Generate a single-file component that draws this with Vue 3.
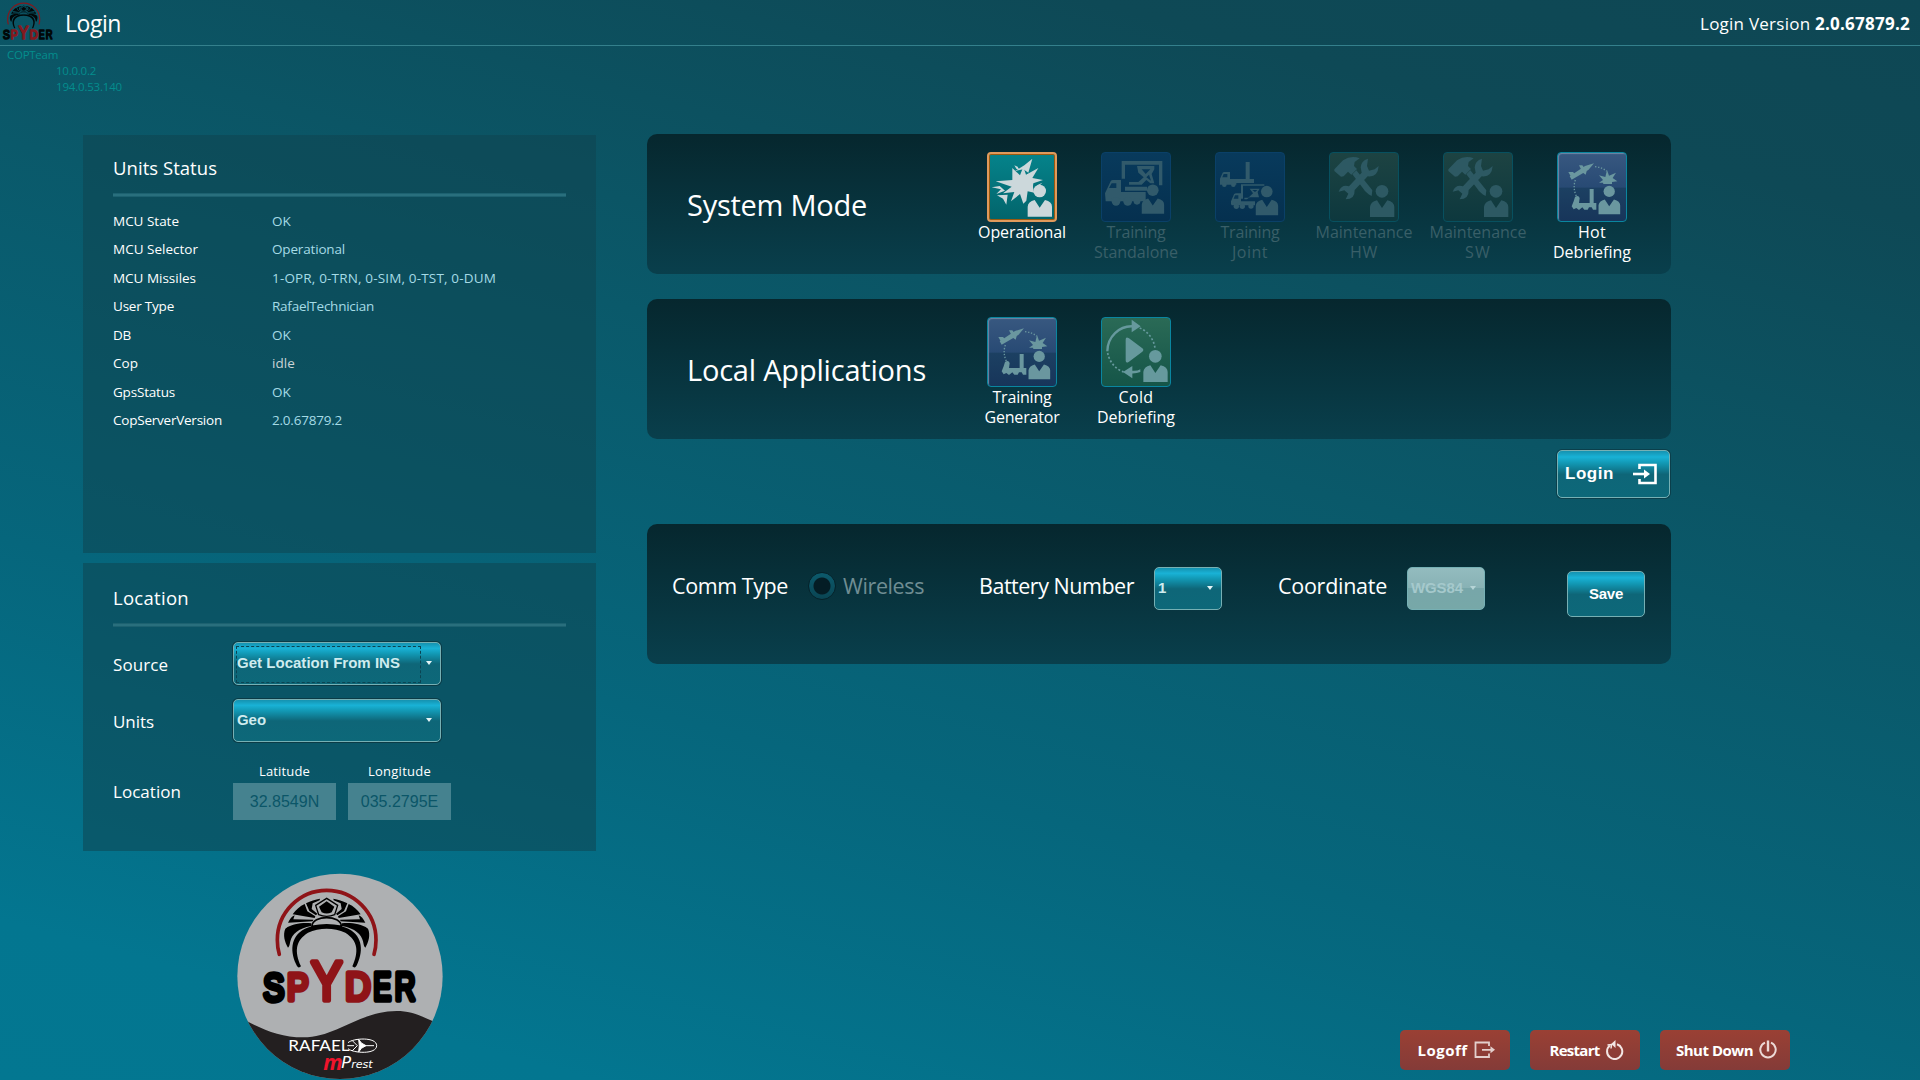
<script setup>
const status = [
  ['MCU State', 'OK', 66, 19],
  ['MCU Selector', 'Operational', 85, 73],
  ['MCU Missiles', '1-OPR, 0-TRN, 0-SIM, 0-TST, 0-DUM', 83, 224],
  ['User Type', 'RafaelTechnician', 61, 102],
  ['DB', 'OK', 18, 19],
  ['Cop', 'idle', 25, 23],
  ['GpsStatus', 'OK', 62, 19],
  ['CopServerVersion', '2.0.67879.2', 109, 70],
]

const modes = [
  { icon: 'blast', kind: 'active', lines: [['Operational', 88]] },
  { icon: 'truck', kind: 'navy', off: true, lines: [['Training', 59], ['Standalone', 84]] },
  { icon: 'joint', kind: 'navy', off: true, lines: [['Training', 59], ['Joint', 36]] },
  { icon: 'tools', kind: 'olive', off: true, lines: [['Maintenance', 97], ['HW', 28]] },
  { icon: 'tools', kind: 'olive', off: true, lines: [['Maintenance', 97], ['SW', 26]] },
  { icon: 'launch', kind: 'blue', lines: [['Hot', 28], ['Debriefing', 78]] },
]

const apps = [
  { icon: 'launch', kind: 'blue', lines: [['Training', 59], ['Generator', 75]] },
  { icon: 'replay', kind: 'green', lines: [['Cold', 35], ['Debriefing', 78]] },
]

// Tracks a label so that it fills the given width in pixels.
const vFit = {
  mounted(el, { value }) {
    const w = el.getBoundingClientRect().width
    el.style.letterSpacing = `${(value - w) / el.textContent.length}px`
  },
}
</script>

<template>
  <div class="screen">
    <svg class="defs" aria-hidden="true">
      <symbol id="brand" viewBox="120 80 480 360">
        <path d="M178 283C173 268 172 254 172 240A148 149 0 0 1 468 240C468 254 467 268 462 283" fill="none" stroke="#8f1418" stroke-width="11" stroke-linecap="round" />
        <g fill="#000">
          <path d="M243 319C236 326 232 321 228 312C208 268 214 222 262 203C298 190 342 190 378 203C426 222 432 268 412 312C408 321 404 326 397 319C417 274 414 242 376 218C342 202 298 202 264 218C226 242 223 274 243 319Z" />
          <path d="M274 190C248 188 218 190 196 206C188 224 194 246 204 263C209 260 209 252 211 244C216 222 234 206 274 198Z" />
          <path d="M366 190C392 188 422 190 444 206C452 224 446 246 436 263C431 260 431 252 429 244C424 222 406 206 366 198Z" />
          <path d="M278 184L204 188C210 176 216 169 224 166L220 178L280 179Z" />
          <path d="M362 184L436 188C430 176 424 169 416 166L420 178L360 179Z" />
          <path d="M284 174L218 163C228 149 240 138 254 132L262 154L286 169Z" />
          <path d="M356 174L422 163C412 149 400 138 386 132L378 154L354 169Z" />
          <path d="M288 166L268 153L258 130C272 123 286 118 300 116L299 121L278 130L275 147L292 161Z" />
          <path d="M352 166L372 153L382 130C368 123 354 118 340 116L341 121L362 130L365 147L348 161Z" />
          <path d="M320 124L343 140L335 157Q320 164 305 157L297 140Z" />
        </g>
        <path d="M320 115L287 136L296 164Q320 174 344 164L353 136Z" fill="none" stroke="#000" stroke-width="4" />
        <path d="M276 199C276 164 364 164 364 199Q320 190 276 199Z" fill="var(--hub)" stroke="#000" stroke-width="5" />
        <g class="word" stroke-width="16" stroke-linejoin="round">
          <text x="130" y="422" font-size="115" textLength="63" lengthAdjust="spacingAndGlyphs">S</text>
          <text class="red" x="201" y="420" font-size="113" textLength="65" lengthAdjust="spacingAndGlyphs">P</text>
          <text x="460" y="421" font-size="115" textLength="54" lengthAdjust="spacingAndGlyphs">E</text>
          <text x="524" y="421" font-size="115" textLength="62" lengthAdjust="spacingAndGlyphs">R</text>
          <text class="red" x="376" y="420" font-size="115" textLength="76" lengthAdjust="spacingAndGlyphs">D</text>
          <text class="red" x="273" y="420" font-size="166" textLength="94" lengthAdjust="spacingAndGlyphs">Y</text>
        </g>
      </symbol>
      <symbol id="person" viewBox="0 0 210 210">
        <circle cx="158" cy="117" r="19" />
        <path d="M122 194V164Q123 149 143 144L158 167L174 144Q195 149 195 164V194Z" />
      </symbol>
      <symbol id="blast" viewBox="0 0 210 210">
        <path d="M76 48L99 70L109 44L117 68L154 48L136 78L168 84L139 94Q136 110 142 122L122 118L118 146L109 155L99 126L72 148L82 120L48 124L74 104L26 88L76 84Z" />
        <path d="M136 20L124 62L109 52L84 57L112 40ZM14 106L38 102L54 116L28 126L42 112ZM30 130L62 128L58 158L48 140ZM82 40L92 44L97 54L88 50ZM150 100L166 92L154 104Z" />
        <use href="#person" />
      </symbol>
      <symbol id="truck" viewBox="0 0 210 210">
        <path d="M62 27H184V100H174V38H72V80H62ZM72 104H138V116H72ZM12 124L29 88Q31 84 36 84H60V120H134V148H14Z" />
        <path d="M108 42H160V52L152 66L160 94H148L136 84L122 98H84V90H112L128 76L112 62ZM122 52L134 66L148 52ZM144 68L136 76L150 86Z" fill-rule="evenodd" />
        <circle cx="45" cy="148" r="13" /><circle cx="80" cy="148" r="13" /><circle cx="108" cy="148" r="10" />
        <path d="M32 94H46V108H24Z" class="cut" />
        <use href="#person" transform="translate(10 7) scale(.92)" />
      </symbol>
      <symbol id="joint" viewBox="0 0 210 210">
        <path d="M15 92V80L23 62Q24 60 28 60H45V81H92V30H104V81H117V93H64V98H15ZM78 97H148V101H84V140H78ZM48 156V148L57 127Q59 124 64 124H78V148H120V160H50Z" />
        <path d="M104 110H134L128 120L132 136H104L96 142H88V137H100L114 124ZM112 114L120 120L127 114Z" fill-rule="evenodd" />
        <circle cx="28" cy="98" r="7" /><circle cx="55" cy="98" r="7" /><circle cx="64" cy="163" r="8" /><circle cx="82" cy="163" r="8" /><circle cx="108" cy="162" r="8" />
        <path d="M26 66H37V76H22ZM60 130H70V140H56Z" class="cut" />
        <use href="#person" transform="translate(10 11) scale(.92)" />
      </symbol>
      <symbol id="tools" viewBox="0 0 210 210">
        <path d="M16 52L42 25Q66 9 92 19L77 30L75 42L84 51L67 68L57 59L44 73L36 74L16 57Z" />
        <path d="M70 67L82 55L130 115L128 132Q110 122 103 110Z" />
        <path d="M117 20Q96 26 95 46L98 62L60 103Q38 96 29 119L46 115L58 125L50 142Q78 142 77 114L116 73Q146 77 149 42L137 52L120 56L114 42Z" />
        <use href="#person" transform="translate(1 1)" />
      </symbol>
      <symbol id="launch" viewBox="0 0 210 210">
        <path d="M38 73L84 42L111 34L94 54L44 83ZM34 60L48 60L56 68L42 74ZM66 40L76 40L82 48L72 52ZM78 62L90 54L86 68Z" />
        <path d="M114 44Q136 46 149 58M55 84Q46 110 60 136" fill="none" stroke="currentColor" stroke-width="4" stroke-dasharray="4 5" />
        <path d="M150 54L156 71L177 62L167 78L181 88L165 90V96H139L138 92L126 92L138 84L126 70L145 75Z" />
        <path d="M44 163L50 148L54 135Q64 128 68 138L66 153H98V111H110V153H118V173H108L104 166H96L92 173H82L76 166L66 174L58 168L50 172Z" />
        <use href="#person" transform="translate(16 14) scale(.89)" />
      </symbol>
      <symbol id="replay" viewBox="0 0 210 210">
        <path d="M19 103A73 76 0 0 1 96 28" fill="none" stroke="currentColor" stroke-width="7" />
        <path d="M116 33A73 76 0 0 1 162 94M20 108A73 76 0 0 0 68 165" fill="none" stroke="currentColor" stroke-width="5" stroke-dasharray="6 6" />
        <path d="M92 8L119 28L92 46ZM94 147V184L66 165ZM90 161Q108 163 118 157V165Q106 170 90 169ZM74 68V130Q74 141 84 134L124 104Q130 99 124 94L84 64Q74 58 74 68Z" />
        <use href="#person" transform="translate(5 1)" />
      </symbol>
    </svg>

    <header class="bar">
      <svg class="mini"><use href="#brand" /></svg>
      <h1><span v-fit="56">Login</span></h1>
      <div class="version"><span v-fit="210">Login Version <b>2.0.67879.2</b></span></div>
    </header>
    <div class="net">
      <div class="team"><span v-fit="51">COPTeam</span></div>
      <div><span v-fit="40">10.0.0.2</span></div>
      <div><span v-fit="66">194.0.53.140</span></div>
    </div>

    <main>
      <div class="left">
        <section class="card units">
          <h2><span v-fit="104">Units Status</span></h2>
          <hr />
          <div v-for="r in status" :key="r[0]" class="stat">
            <div class="key"><span v-fit="r[2]">{{ r[0] }}</span></div>
            <div class="val" :class="{ idle: r[1] === 'idle' }"><span v-fit="r[3]">{{ r[1] }}</span></div>
          </div>
        </section>
        <section class="card loc">
          <h2><span v-fit="76">Location</span></h2>
          <hr />
          <div class="field first">
            <label><span v-fit="55">Source</span></label>
            <div class="combo wide focus"><i class="ring"></i><span v-fit="163">Get Location From INS</span><i class="caret"></i></div>
          </div>
          <div class="field second">
            <label><span v-fit="41">Units</span></label>
            <div class="combo wide"><span v-fit="29">Geo</span><i class="caret"></i></div>
          </div>
          <div class="field third">
            <label><span v-fit="68">Location</span></label>
            <div class="coord"><em><span v-fit="51">Latitude</span></em><div class="box">32.8549N</div></div>
            <div class="coord"><em><span v-fit="63">Longitude</span></em><div class="box">035.2795E</div></div>
          </div>
        </section>
      </div>

      <div class="right">
        <section class="panel">
          <h3><span v-fit="180">System Mode</span></h3>
          <div v-for="(m, i) in modes" :key="i" class="tile" :class="{ off: m.off }">
            <div class="icon" :class="m.kind"><svg><use :href="'#' + m.icon" /></svg></div>
            <div v-for="l in m.lines" :key="l[0]" class="cap"><span v-fit="l[1]">{{ l[0] }}</span></div>
          </div>
        </section>
        <section class="panel">
          <h3><span v-fit="239">Local Applications</span></h3>
          <div v-for="(m, i) in apps" :key="i" class="tile">
            <div class="icon" :class="m.kind"><svg><use :href="'#' + m.icon" /></svg></div>
            <div v-for="l in m.lines" :key="l[0]" class="cap"><span v-fit="l[1]">{{ l[0] }}</span></div>
          </div>
        </section>
        <button class="btn login">
          <span v-fit="49">Login</span>
          <svg width="26" height="22" viewBox="0 0 26 22" fill="none" stroke="#fff">
            <path d="M7.5 6V2H23.5V20H7.5V16" stroke-width="2.6" />
            <path d="M1 11H14" stroke-width="2.6" /><path d="M12 6.5L18 11L12 15.5Z" fill="#fff" stroke="none" />
          </svg>
        </button>
        <section class="panel comm">
          <div class="lbl c1"><span v-fit="116">Comm Type</span></div>
          <div class="radio"></div>
          <div class="lbl c2"><span v-fit="81">Wireless</span></div>
          <div class="lbl c3"><span v-fit="155">Battery Number</span></div>
          <div class="combo num"><span>1</span><i class="caret"></i></div>
          <div class="lbl c4"><span v-fit="109">Coordinate</span></div>
          <div class="combo dis"><span v-fit="52">WGS84</span><i class="caret"></i></div>
          <button class="btn save"><span v-fit="34">Save</span></button>
        </section>
      </div>
    </main>

    <footer>
      <svg class="logo" viewBox="0 0 720 660">
        <clipPath id="disc"><circle cx="360" cy="349" r="308" /></clipPath>
        <g clip-path="url(#disc)">
          <rect width="720" height="660" fill="#aeb0b2" />
          <path d="M50 466C110 500 170 532 250 532C350 532 420 453 530 453C580 453 620 474 680 505V660H50Z" fill="#231f20" />
        </g>
        <use href="#brand" x="120" y="80" width="480" height="360" />
        <text class="rafael" x="205" y="573" textLength="184" lengthAdjust="spacingAndGlyphs">RAFAEL</text>
        <g fill="none" stroke="#fff" stroke-width="3">
          <path d="M384 566C400 580 470 584 470 557C470 530 400 534 384 548" />
          <path d="M382 557H402M436 557H462M396 541L412 557L396 573" />
          <path d="M416 538L424 549L438 557L424 565L416 576L418 557Z" fill="#fff" />
        </g>
        <text class="em" x="310" y="631" textLength="58" lengthAdjust="spacingAndGlyphs">m</text>
        <text class="prest" x="364" y="624" textLength="94" lengthAdjust="spacingAndGlyphs"><tspan font-size="50">P</tspan>rest</text>
      </svg>
      <div class="power">
        <button><span v-fit="50">Logoff</span>
          <svg width="22" height="18" viewBox="0 0 22 18" fill="none" stroke="#e3cfcc" stroke-width="1.8"><path d="M15 5V1.5H1.5V16H15V12.500M8 8.800H18" /><path d="M16.500 5.300L21 8.800L16.500 12.300Z" fill="#e3cfcc" stroke="none" /></svg>
        </button>
        <button><span v-fit="50">Restart</span>
          <svg width="18" height="20" viewBox="0 0 18 20" fill="none" stroke="#f3e6e4" stroke-width="2"><path d="M11 4.200A7.600 7.600 0 1 1 3.800 5.600" /><path d="M9.500 0V8L5.200 4Z" fill="#f3e6e4" stroke="none" /><path d="M1.500 5L5.500 4.500L5 8.500" stroke-width="1.500" /></svg>
        </button>
        <button class="wide"><span v-fit="77">Shut Down</span>
          <svg width="18" height="19" viewBox="0 0 18 19" fill="none" stroke="#ecd9d6" stroke-width="2"><path d="M6 2.600A7.700 7.700 0 1 0 12 2.600" /><path d="M9 0.500V11.500" stroke-width="2.400" /></svg>
        </button>
      </div>
    </footer>
  </div>
</template>

<style>
body { margin: 0; overflow: hidden; }
</style>

<style scoped>
.screen {
  width: 1920px; height: 1080px; overflow: hidden;
  background: linear-gradient(195deg, #0e4754 0%, #0e4956 14%, #0a596a 41%, #06667c 66%, #037690 90%, #037791 100%);
  font-family: "Open Sans", "Noto Sans", sans-serif; color: #fff;
}
.defs { display: none; }
span { display: inline-block; white-space: pre; }
h1, h2, h3 { margin: 0; font-weight: 400; }

.bar { display: flex; height: 45px; border-bottom: 1px solid #34808c; --hub: #0b5161; }
.mini { width: 52px; height: 39px; margin: 2px 0 0 2px; opacity: .9; }
.bar h1 { margin-left: 11px; font-size: 23px; line-height: 46px; }
.version { margin-left: auto; margin-right: 10px; font-size: 17px; line-height: 48px; }
.net { box-sizing: border-box; height: 48px; padding: 1px 0 0 56px; font-size: 11.500px; line-height: 16px; color: #048d8d; }
.team { margin-left: -49px; }

main { display: flex; height: 717px; padding: 41px 0 0 83px; }
.left { width: 513px; }
.card { box-sizing: border-box; padding: 0 30px; background: rgba(15, 67, 79, .52); }
.units { height: 418px; padding-top: 18px; margin-bottom: 10px; }
.loc { height: 288px; padding-top: 20px; }
h2 { font-size: 18.500px; line-height: 30px; }
hr { margin: 10px 0 0; border: 0; height: 4px; background: linear-gradient(#1c6170 0 1px, #296f7d 1px 3px, #1c6170 3px); }
.stat { display: flex; font-size: 13.500px; line-height: 28.500px; }
hr + .stat { margin-top: 9.600px; }
.key { width: 159px; }
.val { color: #a5dbe6; }
.idle { color: #c9d3d6; }

.field { display: flex; }
.field label { width: 120px; font-size: 17px; line-height: 46px; height: 44px; }
.first { margin-top: 15px; }
.second { margin-top: 13px; }
.third { margin-top: 18px; }
.third label { padding-top: 8px; }
.coord { width: 103px; margin-right: 12px; text-align: center; }
.coord em { display: block; font-style: normal; font-size: 13px; line-height: 22px; height: 22px; margin-top: -1px; }
.box { height: 37px; margin-top: 1px; background: #45828f; color: #0b5668; font: 16px/37px "Liberation Sans", Arial, sans-serif; }

.combo, .btn {
  box-sizing: border-box; border: 1px solid #76b0b4; border-radius: 5px;
  background: linear-gradient(#1592b0 0%, #19b2d6 13%, #1299b5 26%, #0e6678 51%, #0d6879 100%);
  font-family: "Liberation Sans", Arial, sans-serif; font-weight: 700;
}
.combo { display: flex; align-items: center; justify-content: space-between; position: relative; color: #cfecef; font-size: 15px; padding: 0 8px 2px 3px; }
.wide.combo { width: 208px; height: 43px; box-shadow: 0 0 0 1px #0b3b46; }
.ring { position: absolute; left: 2px; top: 3px; width: 185px; height: 37px; border: 1px dashed #0b4452; box-sizing: border-box; }
.caret { border: 3.500px solid transparent; border-top: 4px solid #e4f4f6; border-bottom: 0; }

.right { width: 1024px; margin-left: 51px; display: flex; flex-direction: column; }
.panel {
  box-sizing: border-box; display: flex; height: 140px; padding: 18px 0 0 40px; margin-bottom: 25px;
  border-radius: 10px; background: linear-gradient(#06272e, #093f4c); flex: none; margin-top: -1px;
}
.panel + .panel { margin-top: 0; }
h3 { width: 278px; font-size: 29px; line-height: 106px; }
.tile { width: 114px; text-align: center; }
.icon { box-sizing: border-box; width: 70px; height: 70px; margin: 0 auto; border: 1px solid #0a86a0; border-radius: 4px; }
.icon svg { display: block; width: 70px; height: 70px; margin: -1px; fill: currentColor; }
.active { border: 2px solid #e09a5c; background: linear-gradient(#05838b, #02646b); color: #ccd8db; box-shadow: inset 0 0 0 1px #9a5a10; }
.active svg { margin: -2px; }
.blue { background: linear-gradient(#385880, #284a74 50%, #1c4062 52%, #17355a); color: #6a979f; box-shadow: inset 1px 1px 1px #6f87a5; }
.green { background: linear-gradient(#2a6a56, #155548); color: #66999d; }
.navy { background: linear-gradient(#083a5c, #05304f); color: #315a6b; border-color: #0a4068; }
.olive { background: linear-gradient(#1d4342, #0d383e); color: #2d5963; border-color: #07505f; }
.cut { fill: #083757; }
.cap { font-size: 16px; line-height: 20px; margin: 0 -10px; }
.off .cap { color: #395f68; }

.btn { padding: 0; color: #fff; display: flex; align-items: center; }
.login { width: 113px; height: 48px; margin: -14px 1px 26px auto; padding: 0 11px 0 7px; justify-content: space-between; font-size: 17px; box-shadow: 0 0 0 1px #0b3f4b; flex: none; }
.comm { padding: 43px 0 0 25px; align-items: flex-start; margin-top: 0; }
.lbl { font-size: 21.500px; line-height: 38px; flex: none; }
.c1 { width: 136px; }
.radio { box-sizing: border-box; width: 28px; height: 28px; margin: 5px 7px 0 0; border-radius: 50%; border: 1px solid #05222a; background: radial-gradient(circle, #041d25 0 8px, transparent 9px), linear-gradient(#0c5a6c, #0a4553); flex: none; }
.c2 { width: 136px; color: #6f8d93; }
.c3 { width: 175px; }
.num { width: 68px; height: 43px; margin-right: 56px; }
.c4 { width: 129px; }
.dis { width: 78px; height: 43px; margin-right: 82px; background: linear-gradient(#93bcbf, #88b2b5 48%, #77a6a9 50%, #77a8a8); color: #a5c9cc; }
.dis .caret { border-top-color: #b5d4d6; }
.save { width: 78px; height: 46px; margin-top: 4px; padding-bottom: 2px; justify-content: center; font-size: 15px; }

footer { display: flex; height: 220px; padding: 9px 130px 0 220px; }
.logo { width: 240px; height: 220px; margin-top: -1px; --hub: #aeb0b2; flex: none; }
.word text { font-family: "Liberation Sans", Arial, sans-serif; font-weight: 400; fill: #000; stroke: #000; }
.word .red { fill: #8f1418; stroke: #8f1418; }
.rafael { font-family: Lato, sans-serif; font-size: 43px; fill: #fff; }
.em { font: italic 700 62px "Open Sans", sans-serif; fill: #f0142c; }
.prest { font: italic 34px "DejaVu Sans", sans-serif; fill: #fff; }
.power { display: flex; gap: 20px; margin: 169px 0 0 auto; }
.power button {
  width: 110px; height: 40px; padding: 0 0 1px 3px; border: 0; border-radius: 5px; display: flex; align-items: center; justify-content: center; gap: 6px;
  background: linear-gradient(#9a4034, #843b38); color: #fff; font: 700 15px "Open Sans", sans-serif;
}
.power .wide { width: 130px; }
</style>
